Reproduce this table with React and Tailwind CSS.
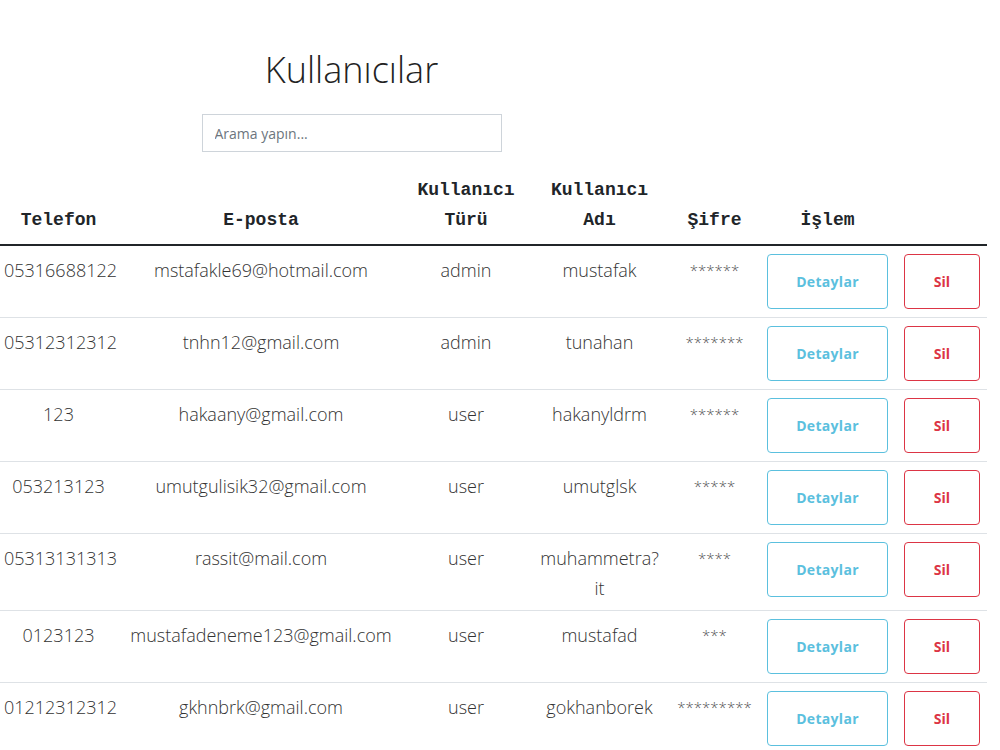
const users = [
  { tel: "05316688122", mail: "mstafakle69@hotmail.com", type: "admin", name: "mustafak", pass: "******" },
  { tel: "05312312312", mail: "tnhn12@gmail.com", type: "admin", name: "tunahan", pass: "*******" },
  { tel: "123", mail: "hakaany@gmail.com", type: "user", name: "hakanyldrm", pass: "******" },
  { tel: "053213123", mail: "umutgulisik32@gmail.com", type: "user", name: "umutglsk", pass: "*****" },
  { tel: "05313131313", mail: "rassit@mail.com", type: "user", name: ["muhammetra?", "it"], pass: "****" },
  { tel: "0123123", mail: "mustafadeneme123@gmail.com", type: "user", name: "mustafad", pass: "***" },
  { tel: "01212312312", mail: "gkhnbrk@gmail.com", type: "user", name: "gokhanborek", pass: "*********" },
];

const Th = ({ children, className = "" }) => (
  <th
    className={`px-[6px] pt-2 pb-[9px] align-bottom text-center font-bold text-[18px] leading-[30px] text-[#212529] border-b-2 border-[#212529] ${className}`}
    style={{ fontFamily: '"Liberation Mono", "DejaVu Sans Mono", monospace' }}
  >
    {children}
  </th>
);

const Td = ({ children, className = "" }) => (
  <td className={`px-[4px] pt-[9px] pb-[7px] align-top text-center border-b border-[#dee2e6] ${className}`}>
    {children}
  </td>
);

export default function App() {
  return (
    <div
      className="min-h-screen w-[1000px] bg-white text-[#333] font-light"
      style={{ fontFamily: '"Open Sans", "Noto Sans", sans-serif' }}
    >
      <div className="w-[703px] flex flex-col items-center pt-[46px]">
        <h1 className="text-[36px] leading-[48px] font-light text-[#222]">Kullanıcılar</h1>
        <input
          type="text"
          placeholder="Arama yapın..."
          className="mt-[20px] w-[300px] h-[38px] px-3 border border-[#ced4da] text-[14px] font-normal text-[#495057] placeholder:text-[#6c757d] outline-none"
        />
      </div>

      <table className="mt-[15px] w-[987px] border-collapse table-fixed">
        <colgroup>
          <col className="w-[117px]" />
          <col className="w-[288px]" />
          <col className="w-[122px]" />
          <col className="w-[145px]" />
          <col className="w-[85px]" />
          <col className="w-[141px]" />
          <col className="w-[89px]" />
        </colgroup>
        <thead>
          <tr>
            <Th>Telefon</Th>
            <Th>E-posta</Th>
            <Th>Kullanıcı<br />Türü</Th>
            <Th>Kullanıcı<br />Adı</Th>
            <Th>Şifre</Th>
            <Th>İşlem</Th>
            <Th></Th>
          </tr>
        </thead>
        <tbody className="text-[18px] leading-[30px]">
          {users.map((u, i) => (
            <tr key={i}>
              <Td className="px-0">{u.tel}</Td>
              <Td>{u.mail}</Td>
              <Td>{u.type}</Td>
              <Td>
                {Array.isArray(u.name) ? (
                  <>
                    {u.name[0]}
                    <br />
                    {u.name[1]}
                  </>
                ) : (
                  u.name
                )}
              </Td>
              <Td className="text-[15px] text-[#555] px-0">{u.pass}</Td>
              <td className="py-2 px-0 align-top text-center border-b border-[#dee2e6]">
                <button className="w-[121px] h-[55px] rounded-[4px] border border-[#5bc0de] bg-white text-[14px] font-bold tracking-[0.3px] text-[#5bc0de]">
                  Detaylar
                </button>
              </td>
              <td className="py-2 pl-[6px] pr-0 align-top text-left border-b border-[#dee2e6]">
                <button className="w-[76px] h-[55px] rounded-[4px] border border-[#dc3545] bg-white text-[14px] font-bold text-[#dc3545]">
                  Sil
                </button>
              </td>
            </tr>
          ))}
        </tbody>
      </table>
    </div>
  );
}
